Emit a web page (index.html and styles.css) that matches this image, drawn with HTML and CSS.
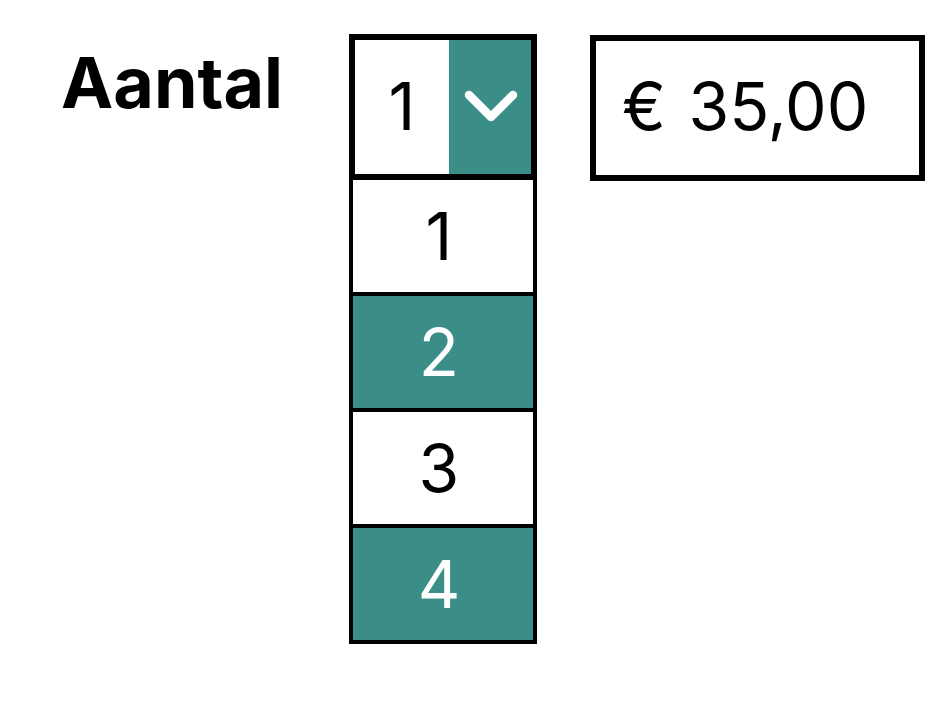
FILE: index.html
```html
<!DOCTYPE html>
<html lang="nl">
<head>
    <meta charset="UTF-8">
    <meta name="viewport" content="width=device-width, initial-scale=1.0">
    <title>Aantal</title>
    <link rel="stylesheet" href="styles.css">
</head>
<body>
    <div class="order-row">
        <label class="label">Aantal</label>
        <div class="picker">
            <div class="select">
                <span class="value">1</span>
                <span class="toggle">
                    <svg width="54" height="34" viewBox="0 0 54 34">
                        <polyline points="5,5 27,27 49,5" fill="none" stroke="#fff" stroke-width="8.5" stroke-linecap="round" stroke-linejoin="round"/>
                    </svg>
                </span>
            </div>
            <ul class="options">
                <li class="option">1</li>
                <li class="option alt">2</li>
                <li class="option">3</li>
                <li class="option alt">4</li>
            </ul>
        </div>
        <div class="price">€ 35,00</div>
    </div>
</body>
</html>
```

FILE: styles.css
```css
body {
    margin: 0;
    background-color: #fff;
    font-family: Inter, "Liberation Sans", sans-serif;
    color: #000;
}

.order-row {
    display: flex;
    align-items: flex-start;
    padding: 34px 0 0 61px;
}

.label {
    width: 288px;
    margin-top: 14px;
    font-size: 70px;
    font-weight: 700;
    line-height: 70px;
}

.picker {
    width: 188px;
}

.select {
    display: flex;
    box-sizing: border-box;
    height: 146px;
    border: 6px solid #000;
}

.value {
    width: 94px;
    display: flex;
    align-items: center;
    justify-content: center;
    padding-bottom: 2px;
    font-size: 66px;
    line-height: 1;
}

.toggle {
    flex: 1;
    display: flex;
    align-items: center;
    justify-content: center;
    padding-left: 2px;
    background-color: #3b8e88;
}

.options {
    list-style: none;
    margin: 0;
    padding: 0;
}

.option {
    box-sizing: border-box;
    height: 116px;
    display: flex;
    align-items: center;
    justify-content: center;
    padding-right: 8px;
    border: 4px solid #000;
    border-top: 0;
    font-size: 66px;
    line-height: 1;
}

.option.alt {
    background-color: #3b8e88;
    color: #fff;
}

.price {
    box-sizing: border-box;
    width: 335px;
    height: 146px;
    margin: 1px 0 0 53px;
    padding: 0 0 4px 26px;
    display: flex;
    align-items: center;
    border: 6px solid #000;
    font-size: 66px;
    line-height: 1;
    word-spacing: 4px;
}
```
